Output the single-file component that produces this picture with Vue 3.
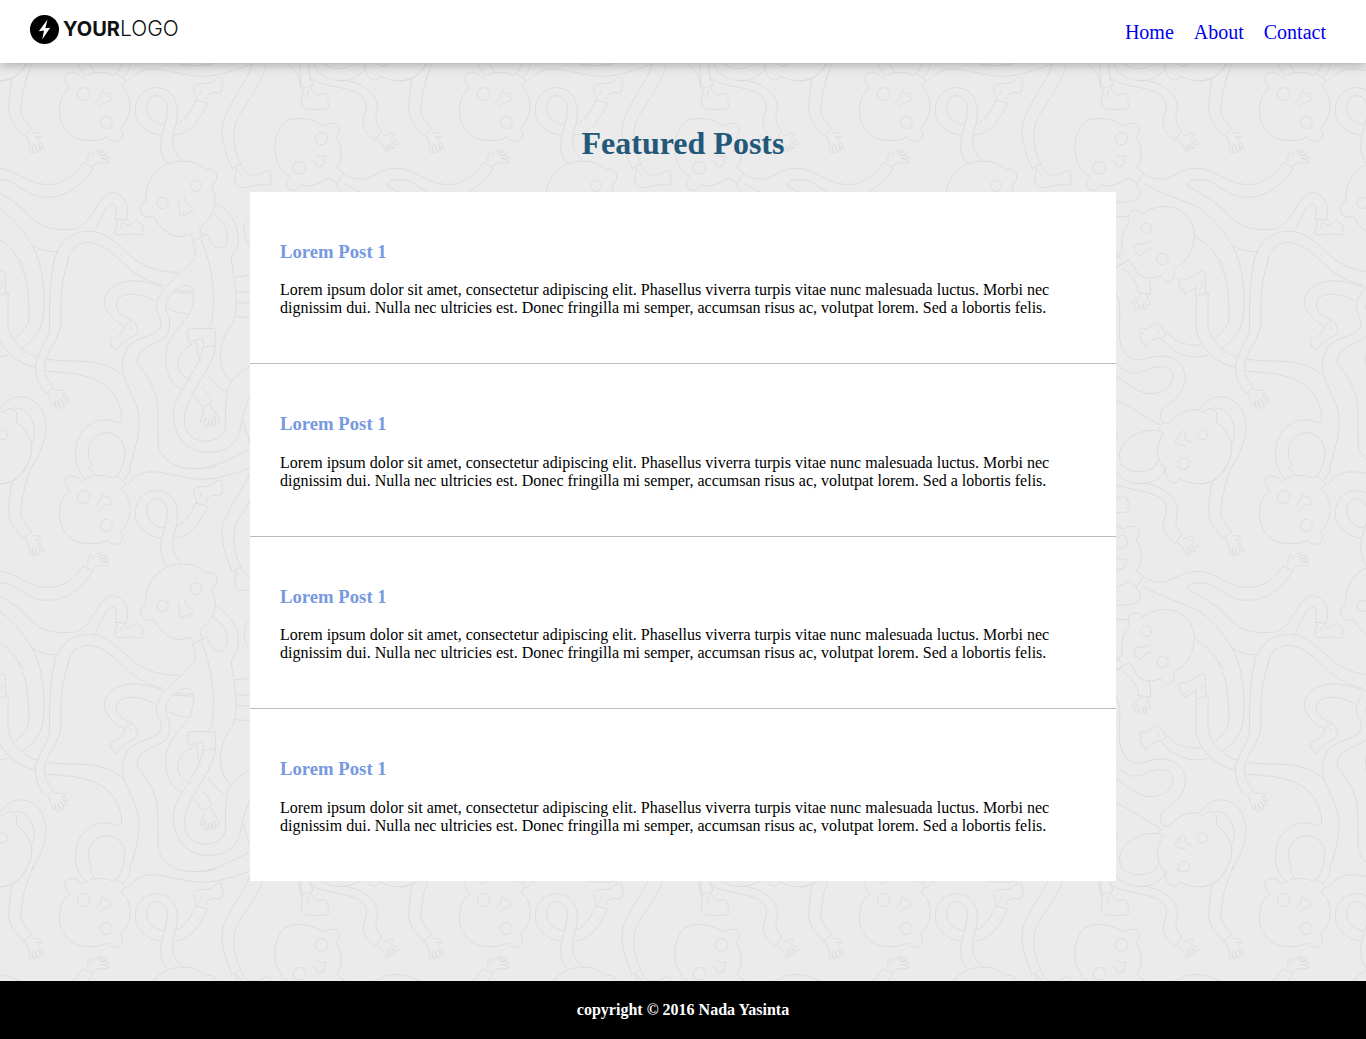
<script setup>
const links = ['Home', 'About', 'Contact']

const posts = Array.from({ length: 4 }, (_, i) => ({
  id: i + 1,
  title: 'Lorem Post 1',
  text: 'Lorem ipsum dolor sit amet, consectetur adipiscing elit. Phasellus viverra turpis vitae nunc malesuada luctus. Morbi nec dignissim dui. Nulla nec ultricies est. Donec fringilla mi semper, accumsan risus ac, volutpat lorem. Sed a lobortis felis.'
}))

// The doodle repeats every 400 x 403; copies on all sides let lines cross the tile edges.
const tile = { width: 400, height: 403 }
const copies = [-1, 0, 1].flatMap((row) =>
  [-1, 0, 1].map((col) => ({ x: col * tile.width, y: row * tile.height }))
)

const circle = (x, y, r) => `M${x - r} ${y}a${r} ${r} 0 1 0 ${2 * r} 0a${r} ${r} 0 1 0 ${-2 * r} 0`

const doodles = [
  {
    // upper half
    x: 0,
    y: -3,
    paths: [
      'M0 64C40 60 60 45 82 9M37 57C28 95 25 130 27 160C35 185 50 205 70 226M100 0C75 60 65 100 62 155C68 175 82 190 95 206L70 226',
      'M96 218C105 216 125 218 125 230C120 232 115 228 108 230C115 240 128 252 131 264C126 270 120 260 114 250C118 260 125 272 118 276C112 272 108 262 104 254C106 264 112 276 104 280C98 272 97 264 96 256C96 265 103 278 94 281C86 270 90 250 76 224',
      'M210 84C175 105 170 165 190 200C205 225 225 240 255 241C285 243 305 240 323 231C330 245 345 247 358 240C370 232 370 215 361 206C385 185 395 150 388 120C385 100 375 88 364 77L376 60',
      'M210 84C195 72 190 50 202 41C218 34 238 42 245 55M247 53C260 45 275 38 287 38C310 36 330 40 342 47L348 38L380 65',
      circle(251, 102, 19),
      circle(319, 187, 18),
      'M287 127L300 112C305 105 302 95 308 94C316 95 314 100 315 104C325 96 332 100 328 108C338 112 338 125 325 124C315 125 305 133 298 143',
      'M232 9C238 25 250 40 258 48M267 9C270 20 278 30 287 38M365 9C362 25 355 34 350 39M392 9C388 30 380 44 368 54',
      'M382 65C400 45 420 26 460 26C500 28 560 49 610 49C660 48 710 30 765 9M530 9C560 19 620 20 645 9',
      'M590 122C592 110 578 95 582 80C590 66 615 75 635 66C645 60 650 50 662 52C670 55 665 62 662 64C672 62 672 72 664 74C674 76 668 84 662 84C672 88 668 94 660 92C668 98 660 101 652 98C635 94 620 100 617 120M605 88C598 92 604 100 598 106',
      'M527 193C555 182 575 150 587 120L623 130C600 175 575 222 520 226',
      'M484 226C440 220 405 190 406 150C407 105 440 80 475 83C515 88 535 120 532 165C530 200 515 215 518 245C520 275 535 292 550 303',
      'M492 193C465 195 440 170 440 142C442 118 455 106 472 107C490 108 502 125 502 150C500 190 484 215 482 250C482 280 490 300 502 312',
      'M502 312C520 303 560 300 585 308C600 314 612 325 616 331C628 325 645 328 650 345C652 362 645 370 634 376C655 425 650 460 598 505L608 530',
      'M502 312C460 330 435 370 437 425C415 432 415 465 440 471C450 473 456 470 460 469C475 500 510 530 540 530C555 528 565 524 572 521L580 541M576 546L620 522',
      circle(588, 377, 17),
      circle(488, 429, 17),
      'M533 420C542 435 535 450 540 464C548 467 550 462 550 458C550 470 562 465 560 455C565 466 575 460 568 452C578 458 585 445 578 440C568 436 556 430 554 412',
      'M578 546C588 570 589 585 580 600M604 536C612 560 620 580 625 600',
      'M650 430C700 460 718 510 715 545C713 570 695 580 694 600M638 460C670 485 685 510 682 540C675 575 640 570 630 540C627 530 624 526 620 522',
      'M750 470C725 490 728 530 750 560',
      'M757 9C745 60 700 110 682 155C655 200 665 250 696 326L722 312C700 260 692 215 715 170C750 115 790 60 798 9',
      'M722 312C730 332 745 347 765 345C785 343 795 330 808 333C816 337 812 342 806 344C818 344 818 352 810 354C818 358 816 364 808 364C816 370 812 376 802 375C780 368 745 388 715 381C698 372 708 345 708 322M714 328C715 340 720 338 724 345',
      'M-162 345C-110 375 -80 342 -40 329C40 310 70 372 145 374C195 372 220 345 250 308L280 325C240 380 200 412 140 412C80 412 60 368 10 360C-20 358 -42 362 -37 378',
      'M-37 378C-10 395 50 420 90 470C130 510 170 510 220 508C280 500 290 400 340 398C375 402 390 440 379 480L344 478M346 478C352 450 350 435 338 432C310 435 305 490 280 515',
      'M352 482C350 500 340 515 348 522C365 530 380 518 395 522C415 525 430 526 434 518C434 512 425 512 424 512C434 508 432 500 424 500C430 494 424 488 417 492C418 484 408 478 402 484C395 492 385 500 374 492L372 482M363 490C360 500 366 505 370 507',
      'M262 305C265 295 262 280 272 274C278 274 275 282 275 288C285 275 300 265 305 271C305 278 295 280 292 282C302 276 318 272 321 279C318 285 305 286 300 288C312 285 328 286 326 293C320 298 308 294 302 296C315 297 328 300 325 306C315 310 300 305 290 310C285 314 280 316 276 320',
      'M-170 370C-120 400 -50 420 0 446C50 480 103 550 118 610M100 557C130 575 155 576 178 574',
      'M160 618C165 560 205 515 265 514C320 515 350 550 405 600M200 618C205 575 225 548 265 547C300 550 330 570 360 600M-16 528C30 555 50 590 72 618'
    ]
  },
  {
    // lower half
    x: 0,
    y: 197,
    paths: [
      'M360 0C400 42 440 65 490 76M405 0C440 22 480 38 537 37',
      'M580 0C550 40 480 80 470 130C465 160 482 165 483 190C480 235 400 225 380 270C360 310 365 330 380 370C400 410 420 450 417 500C412 550 400 590 387 620',
      'M500 155C510 175 510 190 507 215C490 260 410 245 412 310C440 345 470 390 473 440L475 560C490 610 540 625 580 627C650 625 700 590 750 568',
      'M500 156C492 135 500 108 530 88C545 76 560 74 568 78C590 90 580 130 570 160C545 200 495 230 497 300C498 350 520 378 548 389M498 140C520 155 545 162 568 162',
      'M490 82C430 60 390 55 345 75C315 95 305 125 320 150C335 175 355 190 373 197L397 180L365 166C345 150 345 125 358 112C385 95 430 102 468 125M528 90C545 94 560 94 578 92M520 96L578 100',
      'M400 184C415 200 415 220 405 227C385 235 370 245 360 255C355 265 350 275 345 270C342 265 343 260 343 258C335 268 333 258 336 252C328 256 328 248 333 244C328 238 330 236 338 234C355 232 370 215 375 198M388 196C398 200 394 208 390 210',
      'M645 258C645 245 648 225 645 206L572 206C558 206 558 216 568 217C555 220 558 228 568 228C556 232 560 238 568 238C560 242 565 250 574 246C590 240 600 236 608 240C612 250 610 260 610 264M630 228C638 232 636 240 632 242',
      'M750 412C735 440 728 470 720 510C712 550 680 577 620 577C555 575 515 520 521 450C530 390 605 320 608 263L647 256C640 330 565 390 553 470C550 520 580 545 620 544C660 540 680 520 677 480C675 430 680 400 685 380C700 350 725 335 750 318',
      'M594 248C588 270 595 290 602 308M590 248C545 265 520 300 540 335C550 350 560 355 572 361',
      'M625 0C640 60 645 120 636 180C632 195 628 200 622 204M694 0C700 60 720 120 700 185C675 220 655 260 663 310C670 340 680 355 694 364M625 345C640 370 660 385 680 396',
      'M605 380C618 395 630 405 634 429L606 443C600 430 592 420 580 408',
      'M610 445C615 460 600 475 602 488C608 490 615 475 617 472C615 485 610 500 618 504C624 500 624 488 626 480C628 490 626 503 634 503C638 495 634 485 634 478C638 486 642 500 648 498C648 485 642 475 640 468C646 480 655 492 660 486C655 465 640 455 632 434',
      'M705 50C720 50 735 48 750 44M710 95C725 98 740 96 750 95M710 128L750 129M708 170L750 173M727 478L750 550',
      'M278 620C268 600 265 590 265 575C265 545 285 520 320 517C355 520 375 545 375 580C372 600 370 610 366 620'
    ]
  },
  {
    // creatures that hang over the left edge, upper part
    x: -84,
    y: -3,
    paths: [
      'M20 9C50 32 90 32 118 9M-8 9C0 45 40 62 72 62C110 62 140 45 147 18M150 9C145 30 150 55 175 61C183 62 188 52 192 48C230 68 300 75 330 9M180 9C190 22 215 18 220 9',
      'M72 60C110 60 180 85 185 140C182 170 170 180 197 213L178 241C165 232 155 225 145 205C130 180 165 145 145 115C110 75 20 85 -20 55',
      'M200 225C210 228 220 222 228 219C240 220 232 230 225 233C232 240 248 244 247 252C240 258 230 248 226 244C232 255 240 262 233 266C226 264 222 255 218 250C222 262 228 270 222 272C216 268 212 260 210 256C212 265 220 277 213 280C205 275 205 250 185 240',
      'M60 375C80 390 78 420 40 425L0 427M0 468C15 472 30 470 38 469',
      'M80 463C110 435 170 430 205 460C245 495 245 550 205 605C190 620 175 622 172 628M80 463C70 445 45 445 38 465C35 480 38 485 40 488C20 510 15 535 18 575L0 595M0 575L15 600M0 620L40 600L55 620M237 528L240 530',
      circle(91, 505, 16),
      circle(140, 597, 17),
      'M103 542C90 550 78 555 70 552C65 550 58 552 60 558C50 556 50 568 58 570C52 574 56 582 64 580C64 590 76 590 80 580C86 575 95 568 104 567'
    ]
  },
  {
    // creatures that hang over the left edge, lower part
    x: -84,
    y: 197,
    paths: [
      'M172 28C180 50 170 65 152 64C140 60 138 50 135 46C110 58 80 55 65 40L55 20M0 25L35 0',
      'M20 25C50 50 68 70 66 97L104 103C103 90 105 70 98 52',
      'M75 100C75 112 55 112 47 128C50 138 60 125 64 124C60 135 50 148 58 150C66 148 68 138 72 132C70 142 68 152 76 153C82 150 80 138 80 132C84 140 84 154 90 151C94 145 88 135 87 128C92 135 100 140 104 134C100 125 95 115 92 102',
      'M0 100C25 145 0 200 15 255C30 300 60 305 90 296C140 280 200 285 208 350C205 430 130 430 133 465C133 475 138 482 142 488M0 308C30 340 55 345 80 335C120 315 170 310 171 348C165 390 130 405 90 400C50 390 30 365 0 348M0 422C50 440 90 475 133 495',
      'M238 105L240 80C235 90 215 95 210 103C200 100 205 92 208 90C198 98 190 92 200 85C188 85 185 78 195 74C182 72 184 58 195 60C220 62 240 38 262 31C272 38 268 60 268 100M254 62C262 70 260 80 252 88',
      'M357 322C310 310 265 280 245 225C235 200 242 160 241 108L277 98C275 140 278 180 275 190C280 250 340 290 370 292',
      'M306 0C335 50 340 110 338 180C335 205 310 225 290 240M370 10C385 60 387 130 380 180C375 215 345 250 318 264',
      'M416 0C400 60 400 140 401 205C395 250 355 280 358 330C362 360 375 390 392 400L412 379C400 365 390 350 385 332C380 290 420 250 434 205C435 140 430 70 458 0',
      'M398 400C402 420 408 440 418 441C420 435 415 425 416 422C420 435 422 448 430 448C436 442 426 430 425 422C430 432 440 444 445 440C445 430 435 422 433 416C440 425 452 432 455 425C452 418 445 414 440 410C446 412 455 418 458 414C452 405 445 402 438 402C445 400 450 396 445 392C435 390 420 392 410 386',
      'M135 236L155 218L163 228C190 252 220 256 256 256M135 236C180 288 230 298 278 286',
      'M148 222C142 205 135 190 122 188C110 192 100 205 88 208C75 202 65 210 72 218C76 222 80 218 80 220C65 225 68 232 78 232C68 238 70 246 82 242C75 250 80 256 88 250C82 262 88 264 94 258C105 240 120 232 137 235M122 210C130 210 132 216 128 222',
      'M395 298C460 308 520 295 580 320C600 330 615 340 623 349M385 332C440 340 500 335 560 370C600 400 618 440 617 480C613 492 600 487 590 483C540 470 480 500 478 580C478 600 480 610 484 618',
      'M142 488L158 490C185 460 215 445 245 450C252 450 255 458 260 459C270 445 290 440 300 455C305 470 300 480 302 488C330 505 350 540 347 570C345 595 335 610 330 618M142 488L125 512L142 518C120 550 118 590 140 620L148 630',
      'M248 452C270 420 300 405 330 412C370 422 390 460 390 505C388 550 365 590 349 620M297 447C340 435 355 500 355 510C355 530 352 540 347 550',
      circle(260, 525, 15),
      circle(204, 611, 17),
      'M227 547C215 543 208 540 208 535C210 525 208 514 200 514C193 516 193 522 194 528C186 520 182 528 186 536C176 538 175 548 184 552C190 558 205 552 211 562',
      'M125 512C70 505 15 540 10 585C12 600 15 610 20 618M128 598C124 606 120 612 118 618M0 510C6 520 5 530 0 535'
    ]
  },
  {
    // creature and leg near the right edge
    x: 240,
    y: -3,
    paths: [
      'M140 9C165 25 180 50 182 85L220 75C212 60 208 40 205 9M178 9L184 80',
      'M190 86C184 110 180 135 192 144C210 150 245 148 262 147C270 142 268 136 262 135C272 132 270 124 262 124C270 118 266 112 260 113C264 104 256 98 248 102C235 108 215 100 214 80M206 92C198 104 206 112 212 118',
      'M250 200C225 175 165 168 135 185C105 210 95 270 115 310C125 335 140 345 150 348C133 365 136 390 160 391C175 390 180 380 183 376C215 382 240 370 265 355L290 370',
      'M250 200C258 188 285 185 297 200C300 215 295 225 288 230C305 255 312 295 290 324L315 345M312 338L288 375',
      circle(244, 236, 19),
      circle(178, 323, 19),
      'M225 280C235 295 250 285 260 290C262 297 255 298 250 300C262 303 258 312 250 310C255 320 245 322 242 315C240 328 228 326 230 312C226 305 218 302 213 304'
    ]
  }
]
</script>

<template>
  <div class="page">
    <header class="topbar">
      <a class="logo" href="#" aria-label="Your logo">
        <svg class="mark" viewBox="0 0 29 29" aria-hidden="true">
          <circle cx="14.5" cy="14.5" r="14.5" fill="#000" />
          <path d="M17.5 4.5L8.8 16.2L14 15.5L12.2 24.5L20.2 12.7L15.4 13.3Z" fill="#fff" />
        </svg>
        <span class="wordmark"><b>YOUR</b>LOGO</span>
      </a>
      <nav class="menu">
        <a v-for="link in links" :key="link" href="#">{{ link }}</a>
      </nav>
    </header>

    <main class="content">
      <svg class="doodle" aria-hidden="true">
        <defs>
          <g id="doodle-lines" fill="none" stroke="#dcdcdc" stroke-width="3" stroke-linejoin="round">
            <g
              v-for="(part, i) in doodles"
              :key="i"
              :transform="`translate(${part.x} ${part.y}) scale(0.33333)`"
            >
              <path v-for="(d, j) in part.paths" :key="j" :d="d" />
            </g>
          </g>
          <pattern id="doodle-tile" :width="tile.width" :height="tile.height" patternUnits="userSpaceOnUse">
            <use v-for="(c, i) in copies" :key="i" href="#doodle-lines" :x="c.x" :y="c.y" />
          </pattern>
        </defs>
        <rect width="100%" height="100%" fill="url(#doodle-tile)" />
      </svg>

      <h1>Featured Posts</h1>
      <section class="posts">
        <article v-for="post in posts" :key="post.id" class="post">
          <h3>{{ post.title }}</h3>
          <p>{{ post.text }}</p>
        </article>
      </section>
    </main>

    <footer class="footer">copyright © 2016 Nada Yasinta</footer>
  </div>
</template>

<style>
body {
  margin: 0;
}
</style>

<style scoped>
.page {
  font-family: "Liberation Serif", "Times New Roman", serif;
  font-size: 16px;
  color: #000;
}

.topbar {
  position: relative;
  z-index: 2;
  display: flex;
  justify-content: space-between;
  align-items: center;
  padding: 14px 40px 14px 30px;
  background: #fff;
  box-shadow: 0 2px 10px rgba(0, 0, 0, 0.28);
}

.logo {
  display: flex;
  align-items: center;
  gap: 4px;
  padding-bottom: 5px;
  color: #111;
  text-decoration: none;
}

.mark {
  width: 29px;
  height: 29px;
}

.wordmark {
  font: 300 21px/30px Inter, sans-serif;
}

.wordmark b {
  font-size: 20px;
  font-weight: 700;
}

.menu {
  display: flex;
  gap: 20px;
  font-size: 20px;
  line-height: 24px;
}

.menu a {
  color: #0000ee;
  text-decoration: none;
}

.content {
  position: relative;
  padding: 62px 250px 100px;
  background: #ebebeb;
}

.doodle {
  position: absolute;
  inset: 0;
  width: 100%;
  height: 100%;
}

h1 {
  position: relative;
  margin: 0 0 30px;
  font-size: 32px;
  line-height: 37px;
  text-align: center;
  color: #23587a;
}

.posts {
  position: relative;
  background: #fff;
}

.post {
  padding: 30px;
  border-bottom: 1px solid #bbb;
}

.post:last-child {
  border-bottom: 0;
}

.post h3 {
  margin: 1em 0;
  line-height: 22px;
  color: #7799df;
}

.post p {
  margin: 0 0 16px;
  line-height: 18px;
}

.footer {
  padding: 20px;
  line-height: 18px;
  font-weight: bold;
  text-align: center;
  color: #fff;
  background: #000;
}
</style>
